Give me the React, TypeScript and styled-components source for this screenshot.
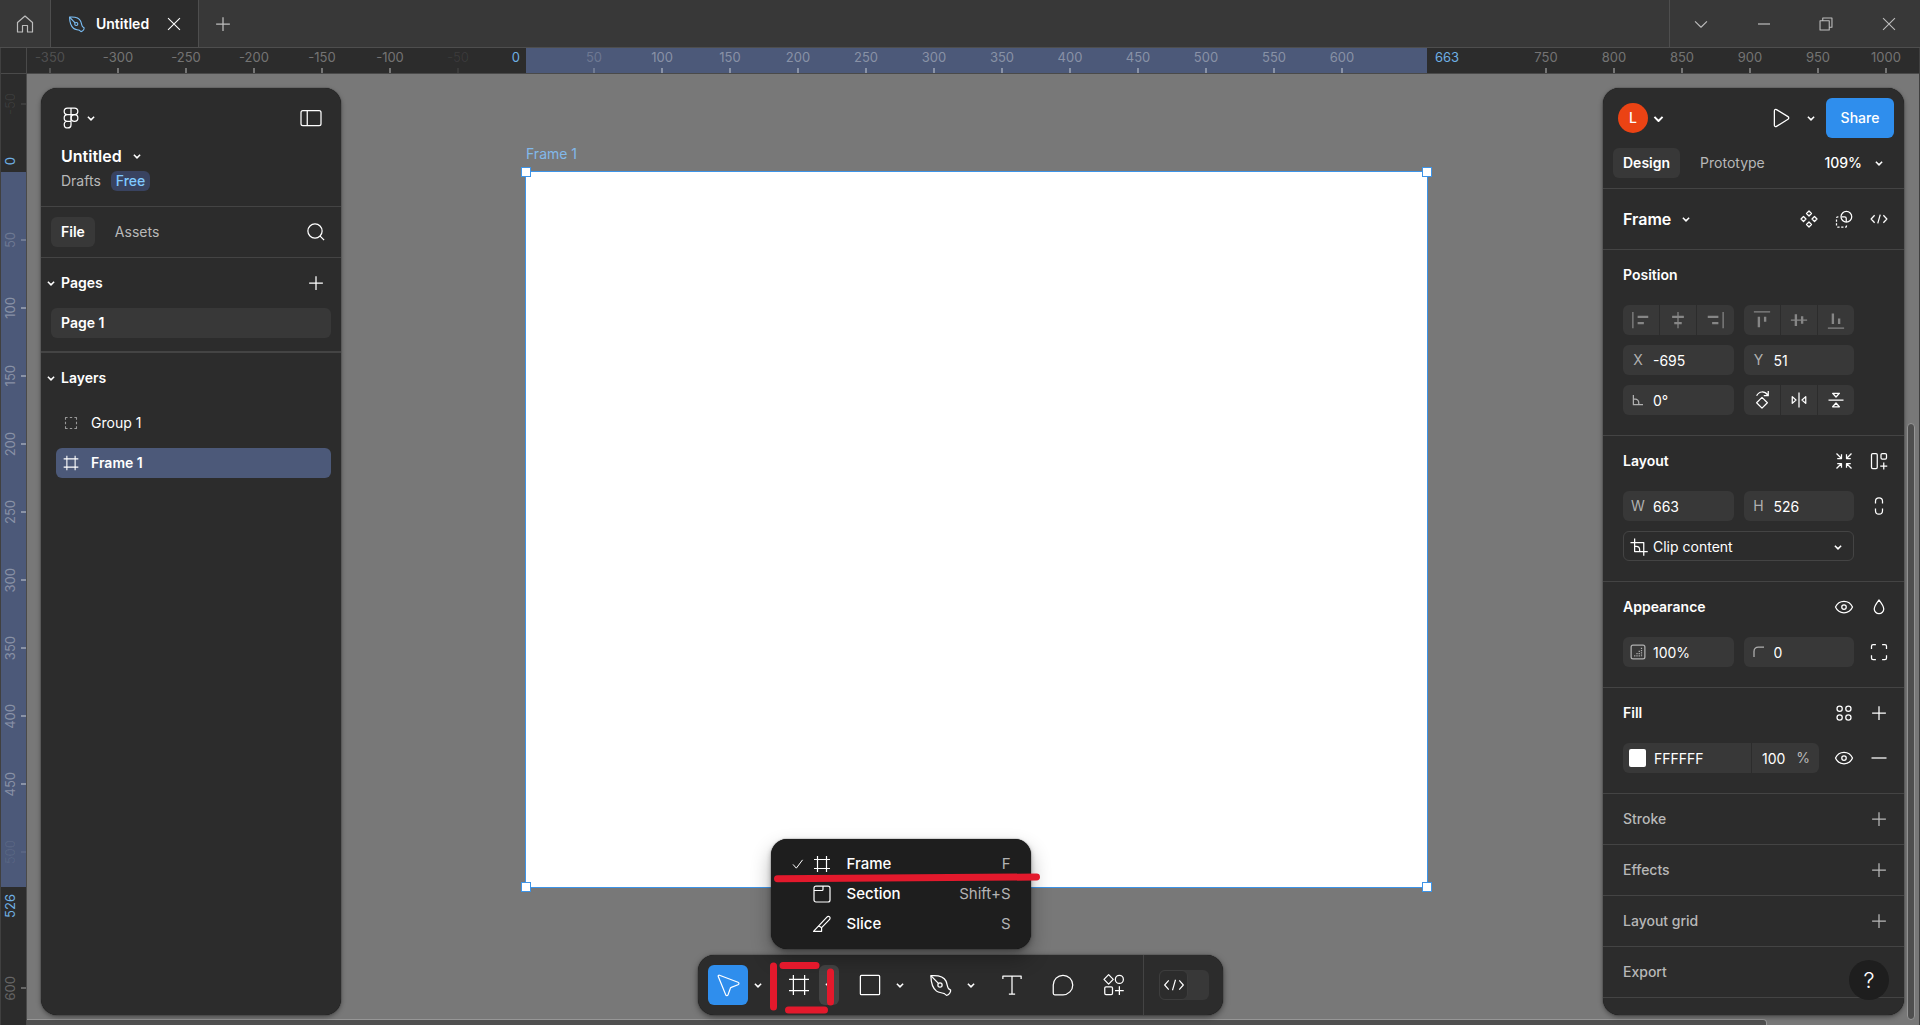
import React from "react";
import styled, { createGlobalStyle, css } from "styled-components";

const GlobalStyle = createGlobalStyle`
  *, *::before, *::after { box-sizing: border-box; }
  body {
    margin: 0;
    background: #787878;
    color: #fff;
    font: 400 14px/20px Inter, "Liberation Sans", sans-serif;
    overflow: hidden;
  }
  button, input, select { font: inherit; color: inherit; }
  h2, h3, ul { margin: 0; padding: 0; list-style: none; font: inherit; }
`;

/* ---------- icons, drawn on a 24 unit grid ---------- */

const ICONS: Record<string, React.ReactNode> = {
  home: <path d="M4.5 10.5 12 4l7.500 6.500V20h-5v-6.500h-5V20h-5z" />,
  chevron: <path strokeWidth="1.200" d="M9.500 11 12 13.500 14.500 11" />,
  plus: <path d="M12 6.500v11M6.500 12h11" />,
  minus: <path d="M6 12h12" />,
  search: <path d="M16.900 11.200a5.700 5.700 0 1 1-11.400 0 5.700 5.700 0 0 1 11.400 0zM15.300 15.300l3.200 3.200" />,
  sidebar: <><rect x="4" y="6" width="16" height="12" rx="1.500" /><path d="M9 6v12" /></>,
  figma: (
    <>
      <path d="M12 4H9.200a2.650 2.650 0 0 0 0 5.300H12zM12 4h2.800a2.650 2.650 0 0 1 0 5.300H12zM12 9.300H9.200a2.650 2.650 0 0 0 0 5.300H12zM12 14.600H9.200A2.700 2.700 0 1 0 12 17.300z" />
      <circle cx="14.800" cy="12" r="2.700" />
    </>
  ),
  components: <path d="M12 5.600l2 2-2 2-2-2zM16.400 10l2 2-2 2-2-2zM12 14.400l2 2-2 2-2-2zM7.600 10l2 2-2 2-2-2z" />,
  mask: (
    <>
      <circle cx="13.900" cy="10.200" r="4.300" />
      <path d="M10 10.200h2.500a1.300 1.300 0 0 1 1.300 1.300v2.800" />
      <path d="M7.500 10.200H7a1 1 0 0 0-1 1v6.300a1 1 0 0 0 1 1h6a1 1 0 0 0 1-1v-1" strokeDasharray="1.800 1.300" />
    </>
  ),
  code: <path d="M8.500 9 5.700 12l2.800 3M15.500 9l2.800 3-2.800 3M13 8.500l-2 7" />,
  alignLeft: <><path d="M5.500 5.500v13" /><path strokeWidth="1.900" d="M9.300 9.500h8.500M9.300 14.500h5" /></>,
  alignCenterH: <><path d="M12 5.500v13" /><path strokeWidth="1.900" d="M7.300 9.500h9.400M9 14.500h6" /></>,
  alignRight: <><path d="M18.500 5.500v13" /><path strokeWidth="1.900" d="M6.200 9.500h8.500M9.700 14.500h5" /></>,
  alignTop: <><path d="M5.500 5.500h13" /><path strokeWidth="1.900" d="M9.500 9.300v8.500M14.500 9.300v4" /></>,
  alignCenterV: <><path d="M5.500 12h13" /><path strokeWidth="1.900" d="M9.500 7.300v9.400M14.500 9v6" /></>,
  alignBottom: <><path d="M5.500 18.500h13" /><path strokeWidth="1.900" d="M9.500 6.700v8.500M14.500 10.700v4.500" /></>,
  angle: <path d="M8.300 8v7.700H16M8.300 11.300h1.500a2.800 2.800 0 0 1 2.800 2.800v1.600" />,
  rotate: <path d="M12 9.900l4.300 4.300-4.300 4.300-4.300-4.300zM7.700 8.600C9.600 4.800 14 4.600 16.600 8M17 4.800v3.700h-3.600" />,
  flipH: <path d="M12 6v12M6.600 9.300 9.600 12l-3 2.700zM17.400 9.300 14.400 12l3 2.700z" />,
  flipV: <path d="M6 12h12M9.300 6.600 12 9.600l2.700-3zM9.300 17.400 12 14.400l2.700 3z" />,
  shrink: (
    <path d="M6 6l3.800 3.800M10 6.600V10H6.600M18 6l-3.800 3.800M14 6.600V10h3.400M6 18l3.800-3.800M10 17.400V14H6.600M18 18l-3.800-3.800M14 17.400V14h3.400" />
  ),
  autoLayout: (
    <>
      <rect x="6" y="6" width="4.600" height="12" rx="1" />
      <rect x="13.600" y="6" width="4.400" height="4.400" rx="1" />
      <path d="M15.800 13.200v5.600M13 16h5.600" />
    </>
  ),
  link: <path d="M9.200 10V8.200a2.800 2.800 0 0 1 5.600 0V10M9.200 14v1.800a2.800 2.800 0 0 0 5.600 0V14" />,
  crop: <path d="M5.200 8.400h10.600v10.500M8.500 5.200v10.400H19M8.500 11.500h1.300a2.700 2.700 0 0 1 2.700 2.700v1.400" />,
  eye: (
    <>
      <path d="M5.200 12c1.300-2.900 3.900-4.600 6.800-4.600s5.500 1.700 6.800 4.600c-1.300 2.900-3.900 4.600-6.800 4.600S6.500 14.900 5.200 12z" />
      <circle cx="12" cy="12" r="1.800" />
    </>
  ),
  drop: <path d="M12 6.300c2 2.600 3.800 4.900 3.800 7.200a3.800 3.800 0 0 1-7.600 0c0-2.300 1.800-4.600 3.800-7.200z" />,
  opacity: (
    <>
      <rect x="6.500" y="6.500" width="11" height="11" rx="1.500" />
      <path strokeDasharray="0.900 0.900" d="M14.800 8.600v7.400M13 11v5M11.200 12.800v3.200M9.400 14.600v1.400" />
    </>
  ),
  radius: <path d="M8 16v-4.500A3.500 3.500 0 0 1 11.500 8H16" />,
  corners: (
    <path d="M6 9.500V7.300A1.300 1.300 0 0 1 7.300 6h2.200M14.500 6h2.200A1.300 1.300 0 0 1 18 7.300v2.200M18 14.500v2.200a1.300 1.300 0 0 1-1.300 1.300h-2.200M9.500 18H7.300A1.300 1.300 0 0 1 6 16.700v-2.200" />
  ),
  styles: (
    <>
      <circle cx="8.500" cy="8.500" r="2.100" /><circle cx="15.500" cy="8.500" r="2.100" />
      <circle cx="8.500" cy="15.500" r="2.100" /><circle cx="15.500" cy="15.500" r="2.100" />
    </>
  ),
  group: (
    <path d="M6 8.500V6h2.300M10.700 6h2.600M15.700 6H18v2.500M18 10.700v2.600M18 15.500V18h-2.300M13.300 18h-2.600M8.300 18H6v-2.500M6 13.300v-2.600" />
  ),
  frame: <path d="M7.500 4v16M16.500 4v16M4 7.500h16M4 16.500h16" />,
  cursor: (
    <path d="M5.200 4.200 20 9.800c1 .4 1 1.600 0 2l-5.400 2.100c-.3.100-.6.400-.7.700L12 19.900c-.3.900-1.500.9-1.800 0L4.200 5.200c-.3-.6.400-1.200 1-1z" />
  ),
  rect: <rect x="4.300" y="4.300" width="15.400" height="15.400" rx=".8" />,
  pen: (
    <>
      <path d="M3.900 4.500c5.200-.4 10.500.9 12.100 4.400 1 2.200.8 4.200 2 6l1.700 1.200c.3 1.700-1.400 3.700-3.300 4.200l-1.700-1.400c-2-.9-4.500-.6-6.300-2C5.400 14.600 4 9.700 3.900 4.500z" />
      <path d="m3.900 4.500 6 6.200" />
      <circle cx="11.200" cy="12" r="1.700" />
    </>
  ),
  text: <path d="M4.700 7.200V4.800h14.600v2.400M12 4.800v14.400M9.500 19.200h5" />,
  comment: <path d="M12 4.200a7.800 7.800 0 1 1 0 15.600H5.400a1.200 1.200 0 0 1-1.200-1.200V12A7.800 7.800 0 0 1 12 4.200z" />,
  actions: (
    <>
      <path d="M7.700 3.700 11.400 7.500l-3.700 3.800L4 7.500z" />
      <circle cx="16.300" cy="7.500" r="3.200" />
      <rect x="4.600" y="13.400" width="6.200" height="6.200" rx="1" />
      <path d="M16.300 13v7M12.800 16.500h7" />
    </>
  ),
  dev: <path d="M7.500 8 4 12l3.500 4M16.500 8l3.500 4-3.500 4M13.300 7.500l-2.600 9" />,
  section: <path d="M6 4.200h12a2 2 0 0 1 2 2V18a2 2 0 0 1-2 2H6a2 2 0 0 1-2-2V6.200a2 2 0 0 1 2-2zM13 4.200v3.300a1 1 0 0 1-1 1H4" />,
  slice: <path d="M3.500 19.300 16.900 5.100c.8-.8 2-.9 2.700-.2s.6 1.900-.2 2.700L11.600 15.600v3.700zM8.700 13.800l2.900 2" />,
  check: <path d="M6 12.500 10 17l7.500-10" />,
  play: <path d="M6.700 6.300c0-1 .9-1.500 1.700-1l9.200 5.600c.8.500.8 1.600 0 2.100l-9.200 5.700c-.8.500-1.700 0-1.700-1z" />,
  close: <path d="m6.500 6.500 11 11M17.500 6.500l-11 11" />,
  down: <path d="m6.500 9.500 5.500 5.500 5.500-5.500" />,
  restore: <path d="M6.500 9h8.500v8.500H6.500zM9 9V6.500h8.500V15H15" />,
};

const Svg = styled.svg<{ $size: number }>`
  flex: none;
  display: block;
  width: ${(p) => p.$size}px;
  height: ${(p) => p.$size}px;
  fill: none;
  stroke: currentColor;
  stroke-width: ${(p) => (p.$size < 26 ? 1.2 : 1)};
  stroke-linejoin: round;
`;

const Icon = ({ name, size = 30 }: { name: string; size?: number }) => (
  <Svg $size={size} viewBox="0 0 24 24" aria-hidden="true">{ICONS[name]}</Svg>
);

const Caret = ({ size = 10 }: { size?: number }) => (
  <Svg $size={size} viewBox="8 8 8 8" aria-hidden="true">{ICONS.chevron}</Svg>
);

/* ---------- shared controls ---------- */

const bareButton = css`
  display: flex;
  align-items: center;
  justify-content: center;
  flex: none;
  margin: 0;
  padding: 0;
  border: 0;
  background: none;
  cursor: default;
`;

const IconButton = styled.button<{ $w?: number; $h?: number }>`
  ${bareButton}
  width: ${(p) => p.$w ?? 30}px;
  height: ${(p) => p.$h ?? 30}px;
`;

const TextButton = styled.button<{ $big?: boolean; $gap?: number }>`
  ${bareButton}
  gap: ${(p) => p.$gap ?? 10}px;
  font-weight: ${(p) => (p.$big ? 600 : 500)};
  font-size: ${(p) => (p.$big ? 16 : 14)}px;
`;

const Tab = styled.button<{ $active?: boolean }>`
  ${bareButton}
  height: 30px;
  padding: 0 10px;
  border-radius: 6px;
  background: ${(p) => (p.$active ? "#383838" : "none")};
  color: ${(p) => (p.$active ? "#fff" : "#b8b8b8")};
  font-weight: ${(p) => (p.$active ? 600 : 400)};
`;

const Spacer = styled.span`flex: 1;`;

/* ---------- window shell ---------- */

const Window = styled.div`
  display: grid;
  grid-template-rows: 48px minmax(0, 1fr);
  height: 100vh;
`;

const TitleBar = styled.header`
  display: flex;
  background: #383838;
  border-bottom: 1px solid #4e4e4e;
  color: #bdbdbd;
`;

const HomeButton = styled.button`
  ${bareButton}
  width: 51px;
  border-right: 1px solid #4e4e4e;
`;

const FileTab = styled.div`
  display: flex;
  align-items: center;
  gap: 8px;
  width: 148px;
  padding: 0 8px 0 15px;
  background: #2c2c2c;
  border-right: 1px solid #4e4e4e;
  color: #fff;
  font-weight: 600;
`;

const Blue = styled.span`color: #7cc0f8;`;

const WindowButtons = styled.div`
  display: flex;
  width: 251px;
  border-left: 1px solid #4e4e4e;
`;

const WindowButton = styled.button`
  ${bareButton}
  flex: 1;
`;

const Workspace = styled.div`
  position: relative;
  display: grid;
  grid-template: 26px minmax(0, 1fr) / 26px minmax(0, 1fr);
  border: solid #404040;
  border-width: 0 1px;
  background: #2c2c2c;
`;

const Corner = styled.div`
  border: solid #4a4a4a;
  border-width: 0 1px 1px 0;
`;

/* ---------- rulers ---------- */

const BOARD = { x: 499, y: 98, width: 901, height: 715 };

const Ruler = styled.div<{ $vertical?: boolean }>`
  position: relative;
  display: flex;
  overflow: hidden;
  font-size: 13px;
  line-height: 19px;
  ${(p) => p.$vertical
    ? css`flex-direction: column; border-right: 1px solid #4a4a4a;`
    : css`border-bottom: 1px solid #4a4a4a;`}
`;

const Range = styled.div<{ $vertical?: boolean }>`
  position: absolute;
  background: #4c5979;
  ${(p) => p.$vertical
    ? css`left: 0; right: 0; top: ${BOARD.y}px; height: ${BOARD.height}px;`
    : css`top: 0; bottom: 0; left: ${BOARD.x}px; width: ${BOARD.width}px;`}
`;

const RangeLabel = styled.span<{ $vertical?: boolean; $end?: boolean }>`
  position: absolute;
  color: #6fb0e4;
  ${(p) => p.$vertical
    ? css`left: 0; writing-mode: vertical-rl; rotate: 180deg; ${p.$end ? "top: calc(100% + 7px);" : "bottom: calc(100% + 7px);"}`
    : css`top: 0; ${p.$end ? "left: calc(100% + 8px);" : "right: calc(100% + 6px);"}`}
`;

const Mark = styled.div<{ $vertical?: boolean; $alpha: number }>`
  position: relative;
  display: flex;
  flex: none;
  align-items: center;
  justify-content: space-between;
  color: rgba(255, 255, 255, ${(p) => p.$alpha});
  ${(p) => p.$vertical
    ? css`height: 68px; &:nth-child(2) { margin-top: -4px; }
        span { writing-mode: vertical-rl; rotate: 180deg; }
        &::after { content: ""; width: 5px; height: 2px; background: currentColor; }`
    : css`flex-direction: column; width: 68px; &:nth-child(2) { margin-left: -11px; }
        &::after { content: ""; width: 2px; height: 5px; background: currentColor; }`}
`;

const range = (from: number, to: number) => {
  const out: number[] = [];
  for (let v = from; v <= to; v += 50) out.push(v);
  return out;
};

const alphaFor = (v: number, fades: Record<number, number>) => fades[v] ?? 0.35;

const H_FADES: Record<number, number> = { [-350]: 0.18, [-50]: 0.07, 0: 0, 50: 0.2, 650: 0, 700: 0 };
const V_FADES: Record<number, number> = { [-50]: 0.08, 0: 0, 50: 0.2, 500: 0.07, 550: 0, 600: 0.28 };

/* ---------- canvas ---------- */

const Canvas = styled.main`
  position: relative;
  overflow: hidden;
  background: #787878;
`;

const Artboard = styled.div`
  position: absolute;
  left: ${BOARD.x}px;
  top: ${BOARD.y}px;
  width: ${BOARD.width}px;
  height: ${BOARD.height}px;
  background: #fff;
  outline: 1px solid #3d94e8;
`;

const ArtboardName = styled.span`
  position: absolute;
  left: 0;
  bottom: calc(100% + 8px);
  color: #82b9ea;
`;

const Handle = styled.i<{ $right?: boolean; $bottom?: boolean }>`
  position: absolute;
  ${(p) => (p.$right ? "right" : "left")}: -5px;
  ${(p) => (p.$bottom ? "bottom" : "top")}: -5px;
  width: 10px;
  height: 10px;
  background: #fff;
  border: 1px solid #3d94e8;
`;

const ScrollThumb = styled.i<{ $vertical?: boolean }>`
  position: absolute;
  background: #4f4f4f;
  border: 1px solid #969696;
  ${(p) => p.$vertical
    ? css`right: 4px; top: 34%; bottom: 5px; width: 8px; border-radius: 4px; margin-top: 26px;`
    : css`left: 0; right: 152px; bottom: -1px; height: 7px; border-left: 0; border-radius: 0 4px 0 0;`}
`;

/* ---------- floating panels ---------- */

const PanelLayer = styled.div`
  position: absolute;
  inset: 0;
  display: flex;
  justify-content: space-between;
  padding: 40px 15px 10px 40px;
  pointer-events: none;
`;

const Panel = styled.aside<{ $w: number }>`
  width: ${(p) => p.$w}px;
  overflow: hidden;
  border-radius: 16px;
  background: #2c2c2c;
  box-shadow: 0 0 1px #000, 0 2px 5px rgba(0, 0, 0, 0.4);
  pointer-events: auto;
`;

const Bar = styled.div<{ $h: number; $pad?: string; $gap?: number }>`
  display: flex;
  align-items: center;
  gap: ${(p) => p.$gap ?? 0}px;
  height: ${(p) => p.$h}px;
  padding: ${(p) => p.$pad ?? "0 10px"};
`;

const Section = styled.section<{ $thick?: boolean; $pad?: string }>`
  padding: ${(p) => p.$pad ?? 0};
  border-bottom: ${(p) => (p.$thick ? 2 : 1)}px solid #444;
`;

const Muted = styled.a`color: #b8b8b8; text-decoration: none;`;

const Badge = styled.span`
  margin-left: 10px;
  padding: 0 5px;
  border-radius: 6px;
  background: #394360;
  color: #80caff;
  font-weight: 500;
`;

const PanelTitle = styled.h2<{ $muted?: boolean }>`
  flex: 1;
  font-weight: ${(p) => (p.$muted ? 500 : 600)};
  color: ${(p) => (p.$muted ? "#b8b8b8" : "#fff")};
`;

const PageRow = styled.button`
  ${bareButton}
  justify-content: flex-start;
  width: 280px;
  height: 30px;
  margin-left: 10px;
  padding: 0 10px;
  border-radius: 6px;
  background: #383838;
  font-weight: 600;
`;

const LayerList = styled.ul`
  display: grid;
  gap: 10px;
  padding: 5px 10px 0 15px;
`;

const LayerRow = styled.button<{ $active?: boolean }>`
  ${bareButton}
  justify-content: flex-start;
  gap: 9px;
  width: 100%;
  height: 30px;
  padding: 0 4px;
  border-radius: 6px;
  background: ${(p) => (p.$active ? "#4c5979" : "none")};
  font-weight: ${(p) => (p.$active ? 600 : 400)};
`;

const Dim = styled.span`color: #999;`;

const Avatar = styled.span`
  display: grid;
  place-items: center;
  width: 30px;
  height: 30px;
  border-radius: 50%;
  background: #eb4314;
`;

const ShareButton = styled.button`
  ${bareButton}
  width: 68px;
  height: 40px;
  border-radius: 6px;
  background: #2f8eed;
  font-weight: 500;
`;

/* ---------- property fields ---------- */

const Fields = styled.div`
  display: grid;
  grid-template-columns: 1fr 1fr 30px;
  gap: 10px;
  padding: 5px 10px 20px 20px;
`;

const Segments = styled.div<{ $dim?: boolean }>`
  display: flex;
  gap: 1px;
  overflow: hidden;
  border-radius: 6px;
  color: ${(p) => (p.$dim ? "#868686" : "#fff")};
  button { flex: 1; background: #383838; }
`;

const FieldBox = styled.label`
  display: flex;
  align-items: center;
  height: 30px;
  overflow: hidden;
  border-radius: 6px;
  background: #383838;
`;

const FieldMark = styled.span`
  display: grid;
  place-items: center;
  flex: none;
  width: 30px;
  color: #b0b0b0;
`;

const Input = styled.input`
  flex: 1;
  min-width: 0;
  width: 0;
  height: 30px;
  padding: 0;
  border: 0;
  outline: 0;
  background: none;
`;

const SelectBox = styled.label`
  display: grid;
  grid-template-columns: 30px 1fr 30px;
  align-items: center;
  grid-column: 1 / 3;
  height: 30px;
  border: 1px solid #444;
  border-radius: 6px;
`;

const Select = styled.select`
  grid-area: 1 / 1 / 2 / 4;
  height: 28px;
  padding: 0 30px 0 29px;
  appearance: none;
  border: 0;
  background: none;
  outline: 0;
`;

const SelectIcon = styled.span<{ $end?: boolean }>`
  grid-area: 1 / ${(p) => (p.$end ? 3 : 1)};
  display: grid;
  place-items: center;
  pointer-events: none;
`;

const FillRow = styled.div`
  display: grid;
  grid-template-columns: minmax(0, 1fr) 30px 30px;
  gap: 5px;
  padding: 5px 10px 20px 20px;
`;

const PaintBox = styled.div`
  display: grid;
  grid-template-columns: minmax(0, 1fr) 67px;
  gap: 1px;
  height: 30px;
  margin-right: 5px;
  overflow: hidden;
  border-radius: 6px;
`;

const PaintCell = styled.div<{ $amount?: boolean }>`
  display: flex;
  align-items: center;
  padding: ${(p) => (p.$amount ? "0 9px 0 10px" : "0 6px")};
  background: #383838;
`;

const Swatch = styled.button`
  ${bareButton}
  width: 17px;
  height: 18px;
  margin-right: 8px;
  border-radius: 2px;
  background: #fff;
`;

const HelpButton = styled.button`
  ${bareButton}
  position: absolute;
  right: 30px;
  bottom: 25px;
  width: 40px;
  height: 40px;
  border-radius: 50%;
  background: #1e1e1e;
  font-size: 22px;
  font-weight: 300;
`;

/* ---------- bottom toolbar ---------- */

const Dock = styled.div`
  position: absolute;
  left: 0;
  right: 0;
  bottom: 10px;
  display: flex;
  justify-content: center;
  pointer-events: none;
`;

const Toolbar = styled.nav`
  display: flex;
  align-items: center;
  gap: 11px;
  height: 60px;
  padding: 0 14px 0 10px;
  border-radius: 16px;
  background: #2c2c2c;
  box-shadow: 0 0 1px #000, 0 2px 6px rgba(0, 0, 0, 0.5);
  pointer-events: auto;
`;

const ToolGroup = styled.div`
  position: relative;
  display: flex;
`;

const ToolButton = styled.button<{ $active?: boolean }>`
  ${bareButton}
  width: 40px;
  height: 40px;
  border-radius: 6px;
  background: ${(p) => (p.$active ? "#2f8eed" : "none")};
`;

const ToolMore = styled.button<{ $open?: boolean }>`
  ${bareButton}
  width: 20px;
  height: 40px;
  border-radius: 6px;
  background: ${(p) => (p.$open ? "#444" : "none")};
`;

const Divider = styled.i`
  align-self: stretch;
  width: 1px;
  margin: 0 4px 0 -2px;
  background: #444;
`;

const DevToggle = styled.label`
  display: grid;
  align-items: center;
  input {
    grid-area: 1 / 1;
    appearance: none;
    width: 50px;
    height: 30px;
    margin: 0;
    border-radius: 6px;
    background: #383838;
  }
  span {
    grid-area: 1 / 1;
    display: grid;
    place-items: center;
    width: 29px;
    height: 30px;
    border: 1px solid #3d3d3d;
    border-radius: 6px;
    background: #2c2c2c;
    overflow: hidden;
  }
`;

const Menu = styled.div`
  position: absolute;
  left: -8px;
  bottom: 56px;
  width: 260px;
  padding: 10px;
  border-radius: 16px;
  background: #1e1e1e;
  box-shadow: 0 0 1px #000, 0 2px 5px rgba(0, 0, 0, 0.3), 0 10px 20px rgba(0, 0, 0, 0.3);
`;

const MenuItem = styled.button`
  ${bareButton}
  display: grid;
  grid-template-columns: 22px 24px 1fr auto;
  align-items: center;
  justify-items: start;
  width: 100%;
  height: 30px;
  padding: 0 10px 0 7px;
  font-size: 15px;
  font-weight: 500;
  text-align: left;
  b { padding-left: 13px; font-weight: 500; }
  kbd { font: inherit; font-weight: 400; color: #b3b3b3; }
`;

const Markup = styled.svg`
  position: absolute;
  left: -13px;
  top: -95px;
  width: 280px;
  height: 150px;
  fill: none;
  stroke: #e3192c;
  stroke-width: 7;
  stroke-linecap: round;
  pointer-events: none;
`;

const MENU = [
  { icon: "frame", name: "Frame", key: "F", checked: true },
  { icon: "section", name: "Section", key: "Shift+S" },
  { icon: "slice", name: "Slice", key: "S" },
];

const Field = ({ mark, label, value }: { mark: React.ReactNode; label: string; value: string }) => (
  <FieldBox>
    <FieldMark>{mark}</FieldMark>
    <Input aria-label={label} defaultValue={value} />
  </FieldBox>
);

const Header = ({ title, icons = [], muted }: { title: string; icons?: string[]; muted?: boolean }) => (
  <Bar $h={50} $pad="0 10px 0 20px" $gap={5}>
    <PanelTitle $muted={muted}>{title}</PanelTitle>
    {icons.map((name) => (
      <IconButton key={name} aria-label={`${title} ${name}`}>
        {muted ? <Muted as="span"><Icon name={name} /></Muted> : <Icon name={name} />}
      </IconButton>
    ))}
  </Bar>
);

const SegmentRow = ({ names, dim }: { names: string[]; dim?: boolean }) => (
  <Segments $dim={dim}>
    {names.map((name) => <IconButton key={name} aria-label={name}><Icon name={name} /></IconButton>)}
  </Segments>
);

const LeftPanel = () => (
  <Panel $w={300} aria-label="File">
    <Section $pad="10px 0 18px">
      <Bar $h={40} $pad="0 15px">
        <TextButton $gap={0} aria-label="Main menu"><Icon name="figma" /><Caret /></TextButton>
        <Spacer />
        <IconButton aria-label="Toggle sidebar"><Icon name="sidebar" /></IconButton>
      </Bar>
      <Bar $h={36} $pad="0 20px">
        <TextButton $big>Untitled<Caret /></TextButton>
      </Bar>
      <Bar $h={14} $pad="0 20px">
        <Muted href="#drafts">Drafts</Muted>
        <Badge>Free</Badge>
      </Bar>
    </Section>
    <Section>
      <Bar $h={50} $gap={10}>
        <Tab $active>File</Tab>
        <Tab>Assets</Tab>
        <Spacer />
        <IconButton aria-label="Search"><Icon name="search" /></IconButton>
      </Bar>
    </Section>
    <Section $thick $pad="0 0 13px">
      <Bar $h={50} $pad="0 10px 0 0">
        <IconButton $w={20} aria-label="Collapse pages"><Caret /></IconButton>
        <PanelTitle>Pages</PanelTitle>
        <IconButton aria-label="Add page"><Icon name="plus" /></IconButton>
      </Bar>
      <PageRow>Page 1</PageRow>
    </Section>
    <Bar $h={50} $pad="0 10px 0 0">
      <IconButton $w={20} aria-label="Collapse layers"><Caret /></IconButton>
      <PanelTitle>Layers</PanelTitle>
    </Bar>
    <LayerList>
      <li><LayerRow><Dim><Icon name="group" size={22} /></Dim>Group 1</LayerRow></li>
      <li><LayerRow $active><Icon name="frame" size={22} />Frame 1</LayerRow></li>
    </LayerList>
  </Panel>
);

const RightPanel = () => (
  <Panel $w={301} aria-label="Properties">
    <Section $pad="10px 0 0">
      <Bar $h={40} $pad="0 10px 0 15px" $gap={5}>
        <TextButton $gap={4} aria-label="Account"><Avatar>L</Avatar><Caret size={13} /></TextButton>
        <Spacer />
        <IconButton aria-label="Present"><Icon name="play" /></IconButton>
        <IconButton $w={20} aria-label="Present options"><Caret /></IconButton>
        <ShareButton>Share</ShareButton>
      </Bar>
      <Bar $h={50} $gap={10}>
        <Tab $active>Design</Tab>
        <Tab>Prototype</Tab>
        <Spacer />
        <TextButton $gap={2}>109%<Icon name="chevron" /></TextButton>
      </Bar>
    </Section>
    <Section>
      <Bar $h={60} $pad="0 10px 0 20px" $gap={5}>
        <TextButton $big>Frame<Caret /></TextButton>
        <Spacer />
        <IconButton aria-label="Create component"><Icon name="components" /></IconButton>
        <IconButton aria-label="Use as mask"><Icon name="mask" /></IconButton>
        <IconButton aria-label="Inspect"><Icon name="code" /></IconButton>
      </Bar>
    </Section>
    <Section>
      <Header title="Position" />
      <Fields>
        <SegmentRow dim names={["alignLeft", "alignCenterH", "alignRight"]} />
        <SegmentRow dim names={["alignTop", "alignCenterV", "alignBottom"]} />
        <span />
        <Field mark="X" label="X" value="-695" />
        <Field mark="Y" label="Y" value="51" />
        <span />
        <Field mark={<Icon name="angle" />} label="Rotation" value="0°" />
        <SegmentRow names={["rotate", "flipH", "flipV"]} />
      </Fields>
    </Section>
    <Section>
      <Header title="Layout" icons={["shrink", "autoLayout"]} />
      <Fields>
        <Field mark="W" label="Width" value="663" />
        <Field mark="H" label="Height" value="526" />
        <IconButton aria-label="Lock aspect ratio"><Icon name="link" /></IconButton>
        <SelectBox>
          <Select aria-label="Clip content" defaultValue="clip"><option value="clip">Clip content</option></Select>
          <SelectIcon><Icon name="crop" /></SelectIcon>
          <SelectIcon $end><Caret /></SelectIcon>
        </SelectBox>
      </Fields>
    </Section>
    <Section>
      <Header title="Appearance" icons={["eye", "drop"]} />
      <Fields>
        <Field mark={<Icon name="opacity" />} label="Opacity" value="100%" />
        <Field mark={<Icon name="radius" />} label="Corner radius" value="0" />
        <IconButton aria-label="Individual corners"><Icon name="corners" /></IconButton>
      </Fields>
    </Section>
    <Section>
      <Header title="Fill" icons={["styles", "plus"]} />
      <FillRow>
        <PaintBox>
          <PaintCell>
            <Swatch aria-label="Fill color" />
            <Input aria-label="Hex" defaultValue="FFFFFF" />
          </PaintCell>
          <PaintCell $amount>
            <Input aria-label="Fill opacity" defaultValue="100" />
            <Muted as="span">%</Muted>
          </PaintCell>
        </PaintBox>
        <IconButton aria-label="Toggle fill"><Icon name="eye" /></IconButton>
        <IconButton aria-label="Remove fill"><Icon name="minus" /></IconButton>
      </FillRow>
    </Section>
    {["Stroke", "Effects", "Layout grid"].map((title) => (
      <Section key={title}><Header muted title={title} icons={["plus"]} /></Section>
    ))}
    <Section><Header muted title="Export" /></Section>
  </Panel>
);

const Tools = () => (
  <Dock>
    <Toolbar aria-label="Tools">
      <ToolGroup>
        <ToolButton $active aria-label="Move"><Icon name="cursor" /></ToolButton>
        <ToolMore aria-label="Move tools"><Caret /></ToolMore>
      </ToolGroup>
      <ToolGroup>
        <ToolButton aria-label="Frame"><Icon name="frame" /></ToolButton>
        <ToolMore $open aria-label="Region tools"><Caret /></ToolMore>
        <Menu role="menu">
          {MENU.map((item) => (
            <MenuItem key={item.name} role="menuitem">
              {item.checked ? <Icon name="check" size={20} /> : <span />}
              <Icon name={item.icon} size={24} />
              <b>{item.name}</b>
              <kbd>{item.key}</kbd>
            </MenuItem>
          ))}
        </Menu>
        <Markup viewBox="0 0 280 150" aria-hidden="true">
          <path d="M11.500 8.700 270.500 7M7.500 96v41M17 95.500h33M64.500 102v30M22.500 140h36" />
        </Markup>
      </ToolGroup>
      <ToolGroup>
        <ToolButton aria-label="Rectangle"><Icon name="rect" /></ToolButton>
        <ToolMore aria-label="Shape tools"><Caret /></ToolMore>
      </ToolGroup>
      <ToolGroup>
        <ToolButton aria-label="Pen"><Icon name="pen" /></ToolButton>
        <ToolMore aria-label="Drawing tools"><Caret /></ToolMore>
      </ToolGroup>
      <ToolButton aria-label="Text"><Icon name="text" /></ToolButton>
      <ToolButton aria-label="Comment"><Icon name="comment" /></ToolButton>
      <ToolButton aria-label="Actions"><Icon name="actions" /></ToolButton>
      <Divider />
      <DevToggle>
        <input type="checkbox" aria-label="Dev Mode" />
        <span><Icon name="dev" size={28} /></span>
      </DevToggle>
    </Toolbar>
  </Dock>
);

export default function App() {
  return (
    <>
      <GlobalStyle />
      <Window>
        <TitleBar>
          <HomeButton aria-label="Home"><Icon name="home" size={24} /></HomeButton>
          <FileTab>
            <Blue><Icon name="pen" size={22} /></Blue>
            Untitled
            <IconButton $w={34} aria-label="Close tab"><Icon name="close" size={26} /></IconButton>
          </FileTab>
          <IconButton $w={48} $h={47} aria-label="New tab"><Icon name="plus" /></IconButton>
          <Spacer />
          <WindowButtons>
            <WindowButton aria-label="Tabs"><Icon name="down" size={26} /></WindowButton>
            <WindowButton aria-label="Minimize"><Icon name="minus" size={24} /></WindowButton>
            <WindowButton aria-label="Restore"><Icon name="restore" size={26} /></WindowButton>
            <WindowButton aria-label="Close"><Icon name="close" size={26} /></WindowButton>
          </WindowButtons>
        </TitleBar>
        <Workspace>
          <Corner />
          <Ruler>
            <Range><RangeLabel>0</RangeLabel><RangeLabel $end>663</RangeLabel></Range>
            {range(-350, 1000).map((v) => (
              <Mark key={v} $alpha={alphaFor(v, H_FADES)}><span>{alphaFor(v, H_FADES) ? v : ""}</span></Mark>
            ))}
          </Ruler>
          <Ruler $vertical>
            <Range $vertical><RangeLabel $vertical>0</RangeLabel><RangeLabel $vertical $end>526</RangeLabel></Range>
            {range(-50, 600).map((v) => (
              <Mark key={v} $vertical $alpha={alphaFor(v, V_FADES)}><span>{alphaFor(v, V_FADES) ? v : ""}</span></Mark>
            ))}
          </Ruler>
          <Canvas>
            <Artboard>
              <ArtboardName>Frame 1</ArtboardName>
              <Handle /><Handle $right /><Handle $bottom /><Handle $right $bottom />
            </Artboard>
            <ScrollThumb />
            <ScrollThumb $vertical />
          </Canvas>
          <PanelLayer>
            <LeftPanel />
            <RightPanel />
          </PanelLayer>
          <Tools />
          <HelpButton aria-label="Help">?</HelpButton>
        </Workspace>
      </Window>
    </>
  );
}
